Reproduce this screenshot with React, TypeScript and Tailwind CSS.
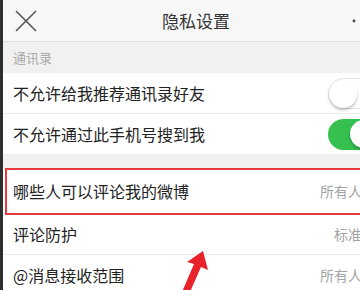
import React from 'react';

const font = { fontFamily: '"Noto Sans CJK SC", "Noto Sans", sans-serif' };

function Toggle({ on }: { on: boolean }) {
  return (
    <span
      className={`relative inline-block h-[31px] w-[51px] shrink-0 rounded-full ${
        on ? 'bg-[#35c04f]' : 'bg-white border border-[#e3e3e3]'
      }`}
    >
      <span
        className={`absolute top-[1px] h-[28px] w-[28px] rounded-full bg-white shadow-[0_2px_3px_rgba(0,0,0,0.25)] ${
          on ? 'right-[1px]' : 'left-0'
        }`}
      />
    </span>
  );
}

function SwitchRow({ label, on }: { label: string; on: boolean }) {
  return (
    <div className="flex h-[41px] items-center justify-between border-b border-[#ececec] bg-white pl-[10px] pr-[10px]">
      <span className="text-[16px] text-[#222]">{label}</span>
      <Toggle on={on} />
    </div>
  );
}

function ValueRow({ label, value, className = '' }: { label: string; value: string; className?: string }) {
  return (
    <div className={`flex items-center justify-between border-b border-[#ececec] bg-white pl-[10px] pr-[27px] ${className}`}>
      <span className="text-[16px] text-[#222]">{label}</span>
      <span className="text-[14px] text-[#a3a3a3]">{value}</span>
    </div>
  );
}

export default function App() {
  return (
    <div className="relative flex h-[290px] w-[360px] overflow-hidden bg-white" style={font}>
      <div className="w-[3px] shrink-0 bg-[#2e2e2e]" />
      <div className="w-[386px] shrink-0">
        <header className="grid h-[42px] grid-cols-[60px_1fr_60px] items-center border-b border-[#dcdcdc] bg-[#f7f7f7]">
          <svg width="22" height="22" viewBox="0 0 22 22" className="ml-[12px]">
            <path d="M1 1 L21 21 M21 1 L1 21" stroke="#555" strokeWidth="1.6" fill="none" />
          </svg>
          <h1 className="text-center text-[17px] text-[#333]">隐私设置</h1>
          <svg width="22" height="4" viewBox="0 0 22 4" className="ml-[23px]">
            <circle cx="2" cy="2" r="1.4" fill="#444" />
            <circle cx="11" cy="2" r="1.4" fill="#444" />
            <circle cx="20" cy="2" r="1.4" fill="#444" />
          </svg>
        </header>
        <div className="flex h-[31px] items-center bg-[#f1f1f1] pl-[10px] text-[13px] text-[#a8a8a8]">通讯录</div>
        <SwitchRow label="不允许给我推荐通讯录好友" on={false} />
        <SwitchRow label="不允许通过此手机号搜到我" on={true} />
        <div className="h-[14px] bg-[#f1f1f1]" />
        <div className="relative">
          <ValueRow label="哪些人可以评论我的微博" value="所有人" className="h-[45px]" />
          <span className="absolute -bottom-[1px] left-[2px] -right-4 -top-[1px] border-2 border-[#e53a3f]" />
        </div>
        <ValueRow label="评论防护" value="标准" className="h-[41px]" />
        <ValueRow label="@消息接收范围" value="所有人" className="h-[41px]" />
      </div>
      <svg className="absolute left-[176px] top-[248px]" width="36" height="44" viewBox="0 0 36 44">
        <path d="M27 3 L32 22 L25 19 L14 44 L6 44 L18 16 L11 14 Z" fill="#e8222b" />
      </svg>
    </div>
  );
}
